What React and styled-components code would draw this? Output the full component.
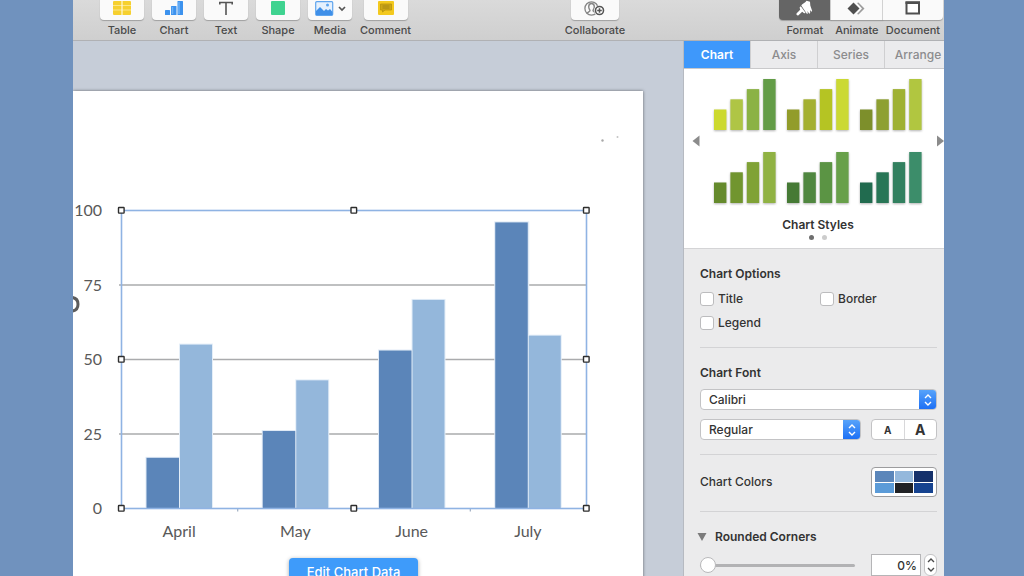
import React, { useState } from "react";
import styled, { createGlobalStyle } from "styled-components";

const toolbarItems = [
  { label: "Table", icon: <TableIcon /> },
  { label: "Chart", icon: <ChartIcon /> },
  { label: "Text", icon: <TextIcon /> },
  { label: "Shape", icon: <ShapeIcon /> },
  { label: "Media", icon: <MediaIcon /> },
  { label: "Comment", icon: <CommentIcon /> },
];

const modes = [
  { label: "Format", icon: <BrushIcon /> },
  { label: "Animate", icon: <DiamondIcon /> },
  { label: "Document", icon: <DocumentIcon /> },
];

const tabs = ["Chart", "Axis", "Series", "Arrange"];

const chartStyles = [
  ["#ccd92f", "#afc545", "#8bb245", "#639c47"],
  ["#929c2a", "#a4b031", "#b5c423", "#cbd934"],
  ["#7d8f2b", "#8ea032", "#9fb133", "#b1c640"],
  ["#658a2c", "#71952f", "#80a236", "#90b243"],
  ["#467a35", "#508740", "#5b9444", "#68a04a"],
  ["#216b4f", "#287656", "#32805f", "#3c8d6a"],
];

const palette = ["#5b86ba", "#94b8dc", "#15316b", "#5b9bd8", "#212225", "#164390"];

const months = [
  { name: "April", values: [17, 55] },
  { name: "May", values: [26, 43] },
  { name: "June", values: [53, 70] },
  { name: "July", values: [96, 58] },
];

function App() {
  const [tab, setTab] = useState("Chart");

  return (
    <Desktop>
      <GlobalStyle />
      <Window>
        <Toolbar>
          <ToolGroup>
            {toolbarItems.map(({ label, icon }) => (
              <ToolItem key={label}>
                <ToolButton aria-label={label}>{icon}</ToolButton>
                <ToolLabel>{label}</ToolLabel>
              </ToolItem>
            ))}
          </ToolGroup>
          <ToolItem>
            <ToolButton $wide aria-label="Collaborate">
              <CollaborateIcon />
            </ToolButton>
            <ToolLabel>Collaborate</ToolLabel>
          </ToolItem>
          <ModeGroup>
            {modes.map(({ label, icon }, i) => (
              <ModeItem key={label}>
                <ModeButton $active={i === 0} aria-label={label}>
                  {icon}
                </ModeButton>
                <ModeLabel>{label}</ModeLabel>
              </ModeItem>
            ))}
          </ModeGroup>
        </Toolbar>

        <Body>
          <Canvas>
            <Slide>
              <BarChart />
              <EditButton>Edit Chart Data</EditButton>
            </Slide>
          </Canvas>

          <Inspector>
            <Tabs>
              {tabs.map((name) => (
                <Tab key={name} $active={tab === name} onClick={() => setTab(name)}>
                  {name}
                </Tab>
              ))}
            </Tabs>

            <StylePicker>
              <ArrowButton aria-label="Previous styles">
                <svg width="8" height="12">
                  <path d="M7.500.500v11L.500 6z" fill="#8b8b8b" />
                </svg>
              </ArrowButton>
              <StyleGrid>
                {chartStyles.map((colors, i) => (
                  <StyleButton key={i} aria-label={`Chart style ${i + 1}`}>
                    <StyleThumb colors={colors} />
                  </StyleButton>
                ))}
              </StyleGrid>
              <ArrowButton aria-label="Next styles">
                <svg width="8" height="12">
                  <path d="M1 .5v11L8 6z" fill="#8b8b8b" />
                </svg>
              </ArrowButton>
              <StyleTitle>
                Chart Styles
                <Dots>
                  <Dot $active />
                  <Dot />
                </Dots>
              </StyleTitle>
            </StylePicker>

            <Section>
              <Heading>Chart Options</Heading>
              <OptionGrid>
                <Option>
                  <Checkbox type="checkbox" />
                  Title
                </Option>
                <Option>
                  <Checkbox type="checkbox" />
                  Border
                </Option>
                <Option>
                  <Checkbox type="checkbox" />
                  Legend
                </Option>
              </OptionGrid>
            </Section>
            <Divider />

            <Section>
              <Heading>Chart Font</Heading>
              <FontRows>
                <Select label="Font family" options={["Calibri", "Helvetica"]} />
                <FontRow>
                  <Select label="Font style" options={["Regular", "Bold"]} />
                  <SizeButtons>
                    <SizeButton aria-label="Smaller text">A</SizeButton>
                    <SizeButton $large aria-label="Larger text">
                      A
                    </SizeButton>
                  </SizeButtons>
                </FontRow>
              </FontRows>
            </Section>
            <Divider />

            <Section $tight>
              <ColorRow>
                Chart Colors
                <ColorWell aria-label="Chart colors">
                  {palette.map((color) => (
                    <Swatch key={color} $color={color} />
                  ))}
                </ColorWell>
              </ColorRow>
            </Section>
            <Divider />

            <Section>
              <Disclosure>
                <svg width="10" height="8">
                  <path d="M.5 0h9L5 8z" fill="#7b7b7b" />
                </svg>
                Rounded Corners
              </Disclosure>
              <CornerRow>
                <Slider type="range" defaultValue="0" aria-label="Corner radius" />
                <Percent type="text" defaultValue="0%" aria-label="Corner radius value" />
                <Stepper aria-label="Step corner radius">
                  <svg width="8" height="14" fill="none" stroke="#4a4a4a" strokeWidth="1.4">
                    <path d="M1 4l3-3 3 3M1 10l3 3 3-3" />
                  </svg>
                </Stepper>
              </CornerRow>
            </Section>
          </Inspector>
        </Body>
      </Window>
    </Desktop>
  );
}

function Select({ label, options }) {
  return (
    <SelectBox>
      <SelectField aria-label={label}>
        {options.map((option) => (
          <option key={option}>{option}</option>
        ))}
      </SelectField>
      <SelectCap>
        <svg width="8" height="12" fill="none" stroke="white" strokeWidth="1.4">
          <path d="M1 4l3-3 3 3M1 8l3 3 3-3" />
        </svg>
      </SelectCap>
    </SelectBox>
  );
}

function StyleThumb({ colors }) {
  return (
    <svg width="62" height="51">
      {colors.map((color, i) => (
        <rect key={color} x={i * 16.4} y={30.5 - i * 10.2} width="12.4" height={20.5 + i * 10.2} fill={color} />
      ))}
    </svg>
  );
}

function BarChart() {
  const left = 48.5;
  const right = 513.5;
  const top = 119.5;
  const bottom = 417.5;
  const middle = (left + right) / 2;
  const step = (right - left) / months.length;
  const y = (value) => bottom - (value * (bottom - top)) / 100;

  return (
    <ChartSvg width="570" height="451">
      <circle cx="529.5" cy="49.5" r="1.2" fill="#a9a9a9" />
      <circle cx="544.5" cy="46" r="1" fill="#c4c4c4" />
      <path d="M-1 206.500c3.800.400 6 3 6 6.700s-2.200 6.400-6 6.800" fill="none" stroke="#5c5c5c" strokeWidth="3" />

      {[0, 25, 50, 75, 100].map((value) => (
        <g key={value}>
          {value > 0 && value < 100 && (
            <path d={`M46 ${y(value)}H${right}`} stroke="#aaabad" strokeWidth="1.3" />
          )}
          <text x="29" y={y(value) + 5.5} textAnchor="end">
            {value}
          </text>
        </g>
      ))}

      {months.map(({ name, values }, i) => {
        const x = left + i * step + 25;
        return (
          <g key={name}>
            <rect x={x - 1} y={y(values[0]) - 1} width="35" height={bottom - y(values[0])} fill="#dfe9f5" />
            <rect x={x + 32.5} y={y(values[1]) - 1} width="34" height={bottom - y(values[1])} fill="#e4eef8" />
            <rect x={x} y={y(values[0])} width="32.5" height={bottom - y(values[0])} fill="#5b85b9" />
            <rect x={x + 33.5} y={y(values[1])} width="32" height={bottom - y(values[1])} fill="#94b7db" />
            <text x={left + (i + 0.5) * step - 0.5} y="446" textAnchor="middle">
              {name}
            </text>
          </g>
        );
      })}

      <path d={`M${left + step} ${bottom}v3M${left + step * 3} ${bottom}v3`} stroke="#8a9cb5" />
      <rect x={left} y={top} width={right - left} height={bottom - top} fill="none" stroke="#8fb3e3" strokeWidth="1.6" />
      {[
        [left, top],
        [middle, top],
        [right, top],
        [left, y(50)],
        [right, y(50)],
        [left, bottom],
        [middle, bottom],
        [right, bottom],
      ].map(([cx, cy]) => (
        <rect
          key={`${cx}-${cy}`}
          x={cx - 3}
          y={cy - 3}
          width="5.6"
          height="5.6"
          rx="0.5"
          fill="white"
          stroke="#2e2e2e"
          strokeWidth="1.4"
        />
      ))}
    </ChartSvg>
  );
}

function TableIcon() {
  return (
    <svg width="18" height="14">
      <rect width="18" height="14" rx="1" fill="#f6d02f" />
      <path d="M0 4.5h18M0 9h18" stroke="#fbe68a" />
      <path d="M9 0v14" stroke="#fff8d8" strokeWidth="1.2" />
    </svg>
  );
}

function ChartIcon() {
  return (
    <svg width="18" height="14">
      <rect x="0" y="9" width="5" height="5" rx="0.5" fill="#3c92ee" />
      <rect x="6" y="5" width="5.5" height="9" rx="0.5" fill="#3c92ee" />
      <rect x="12.5" y="0" width="5.5" height="14" rx="0.5" fill="#3c92ee" />
      <path d="M14 1v12M7.5 6v7" stroke="#6db2f7" strokeWidth="1.5" />
    </svg>
  );
}

function TextIcon() {
  return (
    <svg width="14" height="14" fill="none" stroke="#555" strokeWidth="1.6">
      <path d="M0 1.5h14M7 1.5v12.5M.8 1v2.5M13.2 1v2.5" />
    </svg>
  );
}

function ShapeIcon() {
  return (
    <svg width="14" height="14">
      <rect width="14" height="14" rx="1" fill="#3fd390" />
    </svg>
  );
}

function MediaIcon() {
  return (
    <svg width="31" height="15">
      <rect x="0.7" y="0.7" width="17" height="13.6" rx="1" fill="#e6f1fd" stroke="#5fa5ee" strokeWidth="1.2" />
      <path d="M1 13V10l4-4 4 4 2-2 2 1.500 2-1.500 2.500 3V14H1z" fill="#3f8fe8" />
      <circle cx="12.5" cy="4" r="1.5" fill="#5fa5ee" />
      <path d="M24 6l3 3 3-3" fill="none" stroke="#555" strokeWidth="1.7" />
    </svg>
  );
}

function CommentIcon() {
  return (
    <svg width="16" height="14">
      <rect width="16" height="14" rx="1" fill="#f3c91f" />
      <path d="M2.500 3h11v6H7l-2.500 2V9h-2z" fill="#cda716" stroke="#b8930f" strokeWidth="0.8" />
      <path d="M4.5 5h7M4.5 7h7" stroke="#9c7f14" strokeWidth="0.8" />
    </svg>
  );
}

function CollaborateIcon() {
  return (
    <svg width="21" height="15" fill="none">
      <circle cx="7.5" cy="7.5" r="6.6" stroke="#858585" strokeWidth="1.3" />
      <path
        d="M3 12.500c.5-1.800 3-1.700 3-3 0-.7-1.300-1.700-1.300-3.700 0-2 1.100-3.300 2.800-3.300s2.800 1.300 2.800 3.300c0 2-1.300 3-1.300 3.700 0 .8 1.500 1.200 2.500 2"
        stroke="#858585"
        strokeWidth="1.4"
      />
      <circle cx="15.5" cy="9.5" r="5.3" fill="white" />
      <circle cx="15.5" cy="9.5" r="4" fill="white" stroke="#555" strokeWidth="1.6" />
      <path d="M15.5 7.2v4.6M13.2 9.5h4.6" stroke="#555" strokeWidth="1.5" />
    </svg>
  );
}

function BrushIcon() {
  return (
    <svg width="18" height="16">
      <path
        d="M7 4.500L10.500 2l1-1.200 3.500 1 .3 3.700 1.900 5.500-1 .8-1.200-1.800.2 3-1 .7-1.700-2.700.3 2.500-.8.500L6.300 5.600z"
        fill="white"
      />
      <path
        d="M5.800 6.300l4.900 6.600-1.600.3-1.900-1.500-3.700 3.500c-1.200.9-2.800-.8-1.800-1.900L5.200 9.800 4.600 7.500z"
        fill="white"
      />
    </svg>
  );
}

function DiamondIcon() {
  return (
    <svg width="18" height="13">
      <path d="M10 1l1.500-.5 6 6-6 6L10 12l5-5.500z" fill="#9c9c9c" />
      <path d="M6.500.500l6 6-6 6-6-6z" fill="#4f4f4f" />
    </svg>
  );
}

function DocumentIcon() {
  return (
    <svg width="16" height="14">
      <rect x="1.5" y="1.5" width="12.5" height="11" fill="white" stroke="#4f4f4f" strokeWidth="2" />
      <path d="M.5 1.7h14.5" stroke="#4f4f4f" strokeWidth="2.6" />
    </svg>
  );
}

const GlobalStyle = createGlobalStyle`
  * {
    box-sizing: border-box;
  }

  body {
    margin: 0;
    font-family: Inter, "Liberation Sans", sans-serif;
    font-size: 12px;
    line-height: 16px;
    color: #333;
  }

  button,
  input,
  select {
    margin: 0;
    padding: 0;
    border: none;
    font: inherit;
    color: inherit;
  }

  svg {
    display: block;
    flex-shrink: 0;
  }
`;

const Desktop = styled.div`
  height: 100vh;
  padding: 0 80px 0 73px;
  overflow: hidden;
  background: #7092be;
`;

const Window = styled.div`
  display: flex;
  flex-direction: column;
  height: 100%;
  overflow: hidden;
  background: #c6cdd8;
`;

const Toolbar = styled.header`
  display: flex;
  flex-shrink: 0;
  align-items: flex-end;
  justify-content: space-between;
  height: 41px;
  padding: 0 1px 3px 27px;
  border-bottom: 1px solid #b0b1b4;
  background: linear-gradient(#dadada, #cfcfcf);
`;

const ToolGroup = styled.div`
  display: flex;
  gap: 8px;
`;

const ToolItem = styled.div`
  display: flex;
  flex-direction: column;
  align-items: center;
  gap: 3px;
  min-width: 44px;
`;

const ToolButton = styled.button`
  display: flex;
  align-items: center;
  justify-content: center;
  width: ${({ $wide }) => ($wide ? 48 : 44)}px;
  height: 24px;
  border-radius: 4px;
  background: #fafafa;
  box-shadow: 0 1px 1px rgba(0, 0, 0, 0.25);
`;

const ToolLabel = styled.span`
  font-size: 11px;
  font-weight: 500;
  line-height: 14px;
  color: #4a4a4a;
`;

const ModeGroup = styled.div`
  display: flex;
`;

const ModeItem = styled(ToolItem)`
  min-width: 52px;
`;

const ModeLabel = styled(ToolLabel)`
  padding: 0 3px;
`;

const ModeButton = styled(ToolButton)`
  width: 100%;
  border-right: 1px solid #d8d8d8;
  border-radius: 0;
  background: ${({ $active }) => ($active ? "#656565" : "#fafafa")};

  ${ModeItem}:first-child & {
    border-radius: 4px 0 0 4px;
  }

  ${ModeItem}:last-child & {
    border-right: none;
    border-radius: 0 4px 4px 0;
  }
`;

const Body = styled.div`
  display: flex;
  flex: 1;
  min-height: 0;
`;

const Canvas = styled.main`
  flex: 1;
  min-width: 0;
  padding: 50px 40px 0 0;
  overflow: hidden;
`;

const Slide = styled.div`
  display: flex;
  flex-direction: column;
  align-items: center;
  min-height: 100%;
  padding-right: 9px;
  background: white;
  box-shadow: 0 0 3px rgba(0, 0, 0, 0.5);
`;

const ChartSvg = styled.svg`
  align-self: flex-start;
  font-family: Lato, "Liberation Sans", sans-serif;
  font-size: 16px;
  fill: #595959;
`;

const EditButton = styled.button`
  margin-top: 16px;
  padding: 6px 18px;
  border-radius: 4px;
  background: #3e9bfa;
  box-shadow: 0 1px 4px rgba(0, 0, 0, 0.35);
  font-size: 13px;
  font-weight: 500;
  line-height: 16px;
  color: white;
`;

const Inspector = styled.aside`
  width: 261px;
  overflow: hidden;
  border-left: 1px solid #b6bac1;
  background: #ebebec;

  > nav,
  > section {
    width: 268px;
  }
`;

const Tabs = styled.nav`
  display: flex;
  height: 28px;
  border-bottom: 1px solid #c9c9cb;
`;

const Tab = styled.button`
  flex: 1;
  border-right: 1px solid #cfcfd1;
  background: ${({ $active }) => ($active ? "#3e98fb" : "#ebebed")};
  font-weight: ${({ $active }) => ($active ? 600 : 500)};
  color: ${({ $active }) => ($active ? "white" : "#8c8c8e")};
`;

const StylePicker = styled.section`
  display: grid;
  grid-template-columns: 8px 1fr 8px;
  align-items: center;
  align-content: start;
  padding: 10px 8px 8px;
  border-bottom: 1px solid #d4d4d6;
  background: white;
`;

const ArrowButton = styled.button`
  background: none;
`;

const StyleGrid = styled.div`
  display: grid;
  grid-template-columns: repeat(3, 62px);
  gap: 22px 11px;
  justify-content: center;
`;

const StyleButton = styled.button`
  background: none;
  filter: drop-shadow(0 1px 1px rgba(0, 0, 0, 0.3));
`;

const StyleTitle = styled.div`
  display: flex;
  grid-column: 1 / -1;
  flex-direction: column;
  align-items: center;
  gap: 2px;
  margin-top: 14px;
  font-weight: 600;
`;

const Dots = styled.div`
  display: flex;
  gap: 8px;
`;

const Dot = styled.i`
  width: 5px;
  height: 5px;
  border-radius: 50%;
  background: ${({ $active }) => ($active ? "#6e6e6e" : "#cccccc")};
`;

const Section = styled.section`
  padding: ${({ $tight }) => ($tight ? 12 : 17)}px 15px 14px 16px;
`;

const Divider = styled.hr`
  height: 1px;
  margin: 0 7px 0 16px;
  border: none;
  background: #d3d3d5;
`;

const Heading = styled.h2`
  margin: 0;
  font-size: 12px;
  font-weight: 600;
  line-height: 16px;
`;

const OptionGrid = styled.div`
  display: grid;
  grid-template-columns: 1fr 1fr;
  gap: 8px 3px;
  margin-top: 9px;
  padding-bottom: 2px;
`;

const Option = styled.label`
  display: flex;
  align-items: center;
  gap: 4px;
  font-weight: 500;
`;

const Checkbox = styled.input`
  appearance: none;
  width: 14px;
  height: 14px;
  border: 1px solid #bcbcbe;
  border-radius: 3px;
  background: white;

  &:checked {
    background: #3e98fb;
  }
`;

const FontRows = styled.div`
  display: grid;
  gap: 9px;
  margin-top: 8px;
`;

const FontRow = styled.div`
  display: flex;
  gap: 10px;
`;

const SelectBox = styled.div`
  display: grid;
  flex: 1;
  grid-template-columns: 1fr 17px;
  height: 21px;
  overflow: hidden;
  border: 1px solid #c3c3c5;
  border-radius: 4px;
  background: white;
`;

const SelectField = styled.select`
  grid-row: 1;
  grid-column: 1 / -1;
  padding: 0 8px;
  appearance: none;
  background: none;
  font-weight: 500;
`;

const SelectCap = styled.span`
  display: flex;
  grid-row: 1;
  grid-column: 2;
  align-items: center;
  justify-content: center;
  background: linear-gradient(#57a3fa, #1d70f5);
  pointer-events: none;
`;

const SizeButtons = styled.div`
  display: flex;
  width: 66px;
  border: 1px solid #c3c3c5;
  border-radius: 4px;
  background: white;
`;

const SizeButton = styled.button`
  flex: 1;
  background: none;
  font-size: ${({ $large }) => ($large ? 14 : 10)}px;
  font-weight: 700;
  line-height: 18px;

  & + & {
    border-left: 1px solid #d8d8da;
  }
`;

const ColorRow = styled.div`
  display: flex;
  align-items: center;
  justify-content: space-between;
  font-weight: 500;
`;

const ColorWell = styled.button`
  display: grid;
  grid-template-columns: repeat(3, 1fr);
  gap: 1px;
  width: 66px;
  height: 30px;
  padding: 3px;
  border: 1px solid #9c9c9e;
  border-radius: 4px;
  background: white;
`;

const Swatch = styled.span`
  background: ${({ $color }) => $color};
`;

const Disclosure = styled.button`
  display: flex;
  align-items: center;
  gap: 8px;
  margin-left: -3px;
  background: none;
  font-weight: 600;
`;

const CornerRow = styled.div`
  display: flex;
  align-items: center;
  margin-top: 9px;
`;

const Slider = styled.input`
  flex: 1;
  min-width: 0;
  margin-right: 16px;
  appearance: none;
  background: none;

  &::-webkit-slider-runnable-track {
    height: 3px;
    border-radius: 2px;
    background: #b2b2b4;
  }

  &::-webkit-slider-thumb {
    appearance: none;
    width: 16px;
    height: 16px;
    margin-top: -7px;
    border: 1px solid #b9b9bb;
    border-radius: 50%;
    background: white;
  }
`;

const Percent = styled.input`
  width: 50px;
  height: 22px;
  padding: 0 3px;
  border: 1px solid #b5b5b7;
  background: white;
  font-weight: 500;
  text-align: right;
`;

const Stepper = styled.button`
  display: flex;
  align-items: center;
  justify-content: center;
  width: 13px;
  height: 22px;
  margin-left: 3px;
  border: 1px solid #c3c3c5;
  border-radius: 6px;
  background: white;
`;

export default App;
